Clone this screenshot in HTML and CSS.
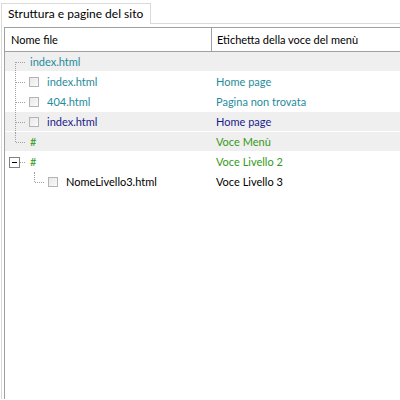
FILE: index.html
```html
<!DOCTYPE html>
<html>
<head>
<meta charset="utf-8">
<link rel="stylesheet" href="styles.css">
</head>
<body>
<div class="tabstrip">
  <div class="tab">Struttura e pagine del sito</div>
</div>
<div class="tabpage">
  <div class="list">
    <div class="header">
      <div class="hcell c1">Nome file</div>
      <div class="hcell c2">Etichetta della voce del menù</div>
    </div>
    <div class="rows">
      <div class="row shade teal">
        <div class="c1 tree"><span class="g first"></span><span class="name root">index.html</span></div>
        <div class="c2"></div>
      </div>
      <div class="row teal">
        <div class="c1 tree"><span class="g mid"></span><span class="cb"></span><span class="name">index.html</span></div>
        <div class="c2">Home page</div>
      </div>
      <div class="row teal">
        <div class="c1 tree"><span class="g mid"></span><span class="cb"></span><span class="name">404.html</span></div>
        <div class="c2">Pagina non trovata</div>
      </div>
      <div class="row shade navy">
        <div class="c1 tree"><span class="g mid"></span><span class="cb"></span><span class="name">index.html</span></div>
        <div class="c2">Home page</div>
      </div>
      <div class="row shade green">
        <div class="c1 tree"><span class="g last"></span><span class="name root">#</span></div>
        <div class="c2">Voce Menù</div>
      </div>
      <div class="row green">
        <div class="c1 tree"><span class="g exp"><span class="box"></span></span><span class="name root">#</span></div>
        <div class="c2">Voce Livello 2</div>
      </div>
      <div class="row black">
        <div class="c1 tree"><span class="g blank"></span><span class="g2 last"></span><span class="cb"></span><span class="name">NomeLivello3.html</span></div>
        <div class="c2">Voce Livello 3</div>
      </div>
    </div>
  </div>
</div>
</body>
</html>
```

FILE: styles.css
```css
html, body {
  margin: 0;
  padding: 0;
  background: #ffffff;
  font-family: "Lato", "Open Sans", sans-serif;
  font-size: 12px;
  color: #000;
}

.tabstrip {
  height: 23px;
  padding-top: 3px;
  box-sizing: border-box;
  display: flex;
  padding-left: 1px;
}

.tab {
  width: 150px;
  box-sizing: border-box;
  border: 1px solid #d9d9d9;
  border-bottom: none;
  background: #fff;
  padding-left: 6px;
  line-height: 19px;
  position: relative;
  z-index: 1;
  height: 21px;
}

.tabpage {
  margin-left: 1px;
  border-top: 1px solid #d9d9d9;
  border-left: 1px solid #d9d9d9;
  padding: 3px 0 0 2px;
  height: 372px;
}

.list {
  border-left: 1px solid #a0a0a0;
  border-top: 1px solid #a0a0a0;
  height: 371px;
  background: #fff;
  font-size: 11px;
}

.header {
  display: flex;
  height: 23px;
  border-bottom: 1px solid #a0a0a0;
  align-items: center;
}

.hcell {
  height: 23px;
  line-height: 24px;
  box-sizing: border-box;
}

.hcell.c1 {
  width: 207px;
  padding-left: 6px;
  border-right: 1px solid #a0a0a0;
}

.hcell.c2 {
  padding-left: 5px;
}

.row {
  display: flex;
  height: 20px;
  box-sizing: border-box;
  border-bottom: 1px solid #fff;
  line-height: 19px;
}

.row.shade {
  background: #efefef;
}

.row .c1 {
  width: 207px;
}

.row .c2 {
  padding-left: 4px;
}

.teal { color: #1f8c9c; }
.navy { color: #1a1a8e; }
.green { color: #359a18; }
.black { color: #000; }

.tree {
  display: flex;
  align-items: center;
  height: 19px;
}

.g {
  width: 20px;
  height: 20px;
  position: relative;
  flex: none;
}

.g::before,
.g::after {
  content: "";
  position: absolute;
}

/* vertical dotted */
.g::before {
  left: 10px;
  border-left: 1px dotted #a0a0a0;
}

/* horizontal dotted */
.g::after {
  left: 11px;
  top: 10px;
  width: 9px;
  border-top: 1px dotted #a0a0a0;
}

.g.first::before { top: 10px; bottom: -1px; }
.g.mid::before { top: 0; bottom: -1px; }
.g.last::before { top: 0; height: 10px; }
.g.exp::before { display: none; }
.g.exp::after { left: 15px; width: 5px; }
.g.blank::before, .g.blank::after { display: none; }

.g2 {
  width: 19px;
  height: 20px;
  position: relative;
  flex: none;
}

.g2::before,
.g2::after {
  content: "";
  position: absolute;
}

.g2.last::before {
  left: 9px;
  top: 0;
  height: 10px;
  border-left: 1px dotted #a0a0a0;
}

.g2.last::after {
  left: 10px;
  top: 10px;
  width: 9px;
  border-top: 1px dotted #a0a0a0;
}

.box {
  position: absolute;
  left: 4px;
  top: 5px;
  width: 11px;
  height: 11px;
  box-sizing: border-box;
  border: 1px solid #808080;
  background: #fff;
}

.box::after {
  content: "";
  position: absolute;
  left: 2px;
  top: 4px;
  width: 5px;
  height: 1px;
  background: #000;
}

.cb {
  flex: none;
  width: 10px;
  height: 10px;
  box-sizing: border-box;
  border: 1px solid #b4b4b4;
  background: linear-gradient(135deg, #e8e8e8, #fafafa);
  margin-left: 4px;
  margin-right: 8px;
}

.name.root {
  margin-left: 5px;
}
```
